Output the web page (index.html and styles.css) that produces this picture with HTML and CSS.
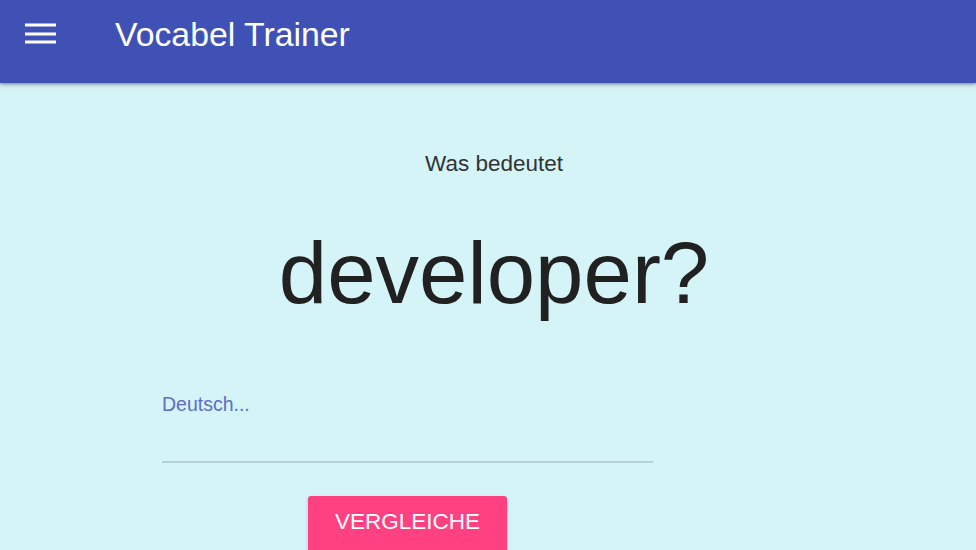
FILE: index.html
```html
<!DOCTYPE html>
<html lang="de">
<head>
<meta charset="utf-8">
<title>Vocabel Trainer</title>
<link rel="stylesheet" href="styles.css">
</head>
<body>
<header class="app-bar">
  <div class="toolbar">
    <button class="menu-btn" aria-label="Menü">
      <svg width="31" height="21" viewBox="0 0 31 21"><rect x="0" y="0.5" width="31" height="3" fill="#fff"/><rect x="0" y="9.5" width="31" height="3" fill="#fff"/><rect x="0" y="17.5" width="31" height="3" fill="#fff"/></svg>
    </button>
    <h1 class="title">Vocabel Trainer</h1>
  </div>
</header>
<main class="content">
  <section class="question">
    <p class="prompt">Was bedeutet</p>
    <p class="word">developer?</p>
  </section>
  <form class="answer-form">
    <label class="field">
      <span class="field-label">Deutsch...</span>
      <input class="field-input" type="text">
    </label>
    <div class="actions">
      <button type="button" class="compare-btn">VERGLEICHE</button>
    </div>
  </form>
</main>
</body>
</html>
```

FILE: styles.css
```css
* { box-sizing: border-box; }
html, body { margin: 0; padding: 0; }
body {
  font-family: "Liberation Sans", Arial, sans-serif;
  background: #d4f4f8;
  width: 976px;
  height: 550px;
  overflow: hidden;
}
.app-bar {
  background: #3f51b5;
  height: 83px;
  box-shadow: 0 2px 4px rgba(0,0,0,0.25), 0 1px 2px rgba(0,0,0,0.2);
  position: relative;
  z-index: 1;
}
.toolbar {
  height: 64px;
  display: flex;
  align-items: center;
  padding-left: 25px;
}
.menu-btn {
  background: none;
  border: 0;
  padding: 0;
  width: 31px;
  height: 21px;
  margin-top: 3px;
  display: flex;
}
.title {
  margin: 3px 0 0 59px;
  font-weight: normal;
  font-size: 33.8px;
  line-height: 40px;
  color: #fff;
}
.content {
  padding-top: 67px;
}
.question {
  padding-left: 12px;
  text-align: center;
}
.prompt {
  margin: 0;
  font-size: 22.5px;
  line-height: 27px;
  color: #333;
}
.word {
  margin: 46px 0 0;
  font-size: 87px;
  line-height: 100px;
  color: #212121;
}
.answer-form {
  width: 491px;
  margin: 70px 0 0 162px;
}
.field {
  display: block;
}
.field-label {
  display: block;
  font-size: 19.5px;
  line-height: 22px;
  color: #5f6dc4;
}
.field-input {
  display: block;
  width: 100%;
  height: 48px;
  border: 0;
  border-bottom: 2px solid #b6d1d5;
  background: transparent;
  outline: none;
}
.actions {
  display: flex;
  justify-content: center;
  margin-top: 33px;
}
.compare-btn {
  width: 199px;
  border: 0;
  border-radius: 3px;
  background: #ff4081;
  color: #fff;
  font-family: "Liberation Sans", Arial, sans-serif;
  font-size: 22.5px;
  line-height: 51px;
  padding: 0 0 12px;
  box-shadow: 0 2px 4px rgba(0,0,0,0.15);
}
```
